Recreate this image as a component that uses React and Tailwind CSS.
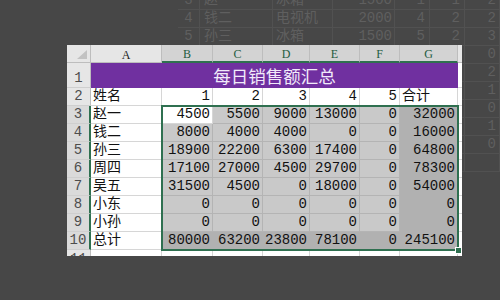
import React from "react";

const FONT = "font-['Liberation_Mono','Noto_Sans_CJK_SC',monospace]";

const rows = [
  ["赵一", 4500, 5500, 9000, 13000, 0, 32000],
  ["钱二", 8000, 4000, 4000, 0, 0, 16000],
  ["孙三", 18900, 22200, 6300, 17400, 0, 64800],
  ["周四", 17100, 27000, 4500, 29700, 0, 78300],
  ["吴五", 31500, 4500, 0, 18000, 0, 54000],
  ["小东", 0, 0, 0, 0, 0, 0],
  ["小孙", 0, 0, 0, 0, 0, 0],
  ["总计", 80000, 63200, 23800, 78100, 0, 245100],
];

const bgRows = [
  ["3", "赵一", "冰箱", "1500", "1", "1", "2"],
  ["4", "钱二", "电视机", "2000", "4", "2", "2"],
  ["5", "孙三", "冰箱", "1500", "5", "2", "3"],
  ["", "", "", "", "", "", "0"],
  ["", "", "", "", "", "", "2"],
  ["", "", "", "", "", "", "1"],
  ["", "", "", "", "", "", "0"],
  ["", "", "", "", "", "", "1"],
  ["", "", "", "", "", "", "0"],
  ["", "", "", "", "", "", ""],
];

function Cell({ children, right, tone }) {
  const toneCls =
    tone === "sel"
      ? "bg-[#c9c9c9] border-[#b4b4b4]"
      : tone === "dark"
      ? "bg-[#b1b1b1] border-[#b1b1b1]"
      : "bg-white border-[#d6d6d6]";
  return (
    <div
      className={`flex items-end overflow-hidden whitespace-nowrap border-r border-b text-[14px] leading-[18px] text-[#111] ${
        right ? "justify-end pr-[2px]" : "pl-[2px]"
      } ${toneCls}`}
    >
      {children}
    </div>
  );
}

function RowHead({ n, sel }) {
  return (
    <div
      className={`flex items-end justify-center overflow-hidden border-b border-[#cfcfcf] text-[14px] leading-[18px] text-[#4d4d4d] ${
        sel
          ? "bg-[#dadada] border-r-2 border-r-[#2f7050]"
          : "bg-[#e6e6e6] border-r border-r-[#bdbdbd]"
      }`}
    >
      {n}
    </div>
  );
}

function ColHead({ l, sel }) {
  return (
    <div
      className={`flex items-center justify-center pt-[2px] border-r border-[#bdbdbd] font-['Liberation_Serif',serif] text-[12px] ${
        sel
          ? "bg-[#d3d3d3] text-[#1f5c3f] border-b-2 border-b-[#2f7050]"
          : "bg-[#e6e6e6] text-[#222] border-b border-b-[#bdbdbd]"
      }`}
    >
      {l}
    </div>
  );
}

export default function App() {
  return (
    <div className={`relative w-[500px] h-[300px] overflow-hidden bg-[#474747] ${FONT}`}>
      {/* faded sheet in the background */}
      <div className="absolute left-[178px] top-[-8px] grid grid-cols-[22px_73px_60px_62px_35px_35px_35px] auto-rows-[18px] text-[14px] leading-[18px] text-[#5f5f5f]">
        {bgRows.map((r, i) => (
          <React.Fragment key={i}>
            <div className="flex items-end justify-center border-b border-r border-[#515151]">{r[0]}</div>
            <div className="flex items-end pl-[4px] border-b border-r border-[#515151]">{r[1]}</div>
            <div className="flex items-end pl-[3px] border-b border-r border-[#515151]">{r[2]}</div>
            <div className="flex items-end justify-end pr-[2px] border-b border-r border-[#515151]">{r[3]}</div>
            <div className="flex items-end justify-end pr-[4px] border-b border-r border-[#515151]">{r[4]}</div>
            <div className="flex items-end justify-end pr-[4px] border-b border-r border-[#515151]">{r[5]}</div>
            <div className="flex items-end justify-end pr-[3px] border-b border-r border-[#515151]">{r[6]}</div>
          </React.Fragment>
        ))}
      </div>

      {/* main sheet */}
      <div className="relative z-10 ml-[67px] mt-[45px] w-[395px] h-[211px] overflow-hidden bg-white">
        <div className="grid grid-cols-[24px_71px_51px_50px_47px_50px_40px_58px_4px] grid-rows-[18px_25px_repeat(9,18px)_6px]">
          {/* header row */}
          <div className="relative bg-[#e6e6e6] border-r border-b border-[#bdbdbd]">
            <div className="absolute right-[3px] bottom-[3px] w-0 h-0 border-l-[10px] border-l-transparent border-b-[9px] border-b-[#c2c2c2]" />
          </div>
          <ColHead l="A" />
          <ColHead l="B" sel />
          <ColHead l="C" sel />
          <ColHead l="D" sel />
          <ColHead l="E" sel />
          <ColHead l="F" sel />
          <ColHead l="G" sel />
          <div className="bg-[#e6e6e6] border-b border-[#bdbdbd]" />

          {/* row 1 */}
          <RowHead n="1" />
          <div className="col-span-7 flex items-center justify-center pt-[1px] bg-[#7030a0] font-['Noto_Sans_CJK_SC',sans-serif] text-[17.5px] tracking-[0px] text-[#f1eafa]">
            每日销售额汇总
          </div>
          <div className="bg-white border-b border-[#d6d6d6]" />

          {/* row 2 */}
          <RowHead n="2" />
          <Cell>姓名</Cell>
          <Cell right>1</Cell>
          <Cell right>2</Cell>
          <Cell right>3</Cell>
          <Cell right>4</Cell>
          <Cell right>5</Cell>
          <Cell>合计</Cell>
          <div className="bg-white border-b border-[#d6d6d6]" />

          {/* rows 3-10 */}
          {rows.map((r, i) => (
            <React.Fragment key={i}>
              <RowHead n={String(i + 3)} sel />
              <Cell>{r[0]}</Cell>
              {r.slice(1).map((v, j) => (
                <Cell
                  key={j}
                  right
                  tone={
                    i === 0 && j === 0
                      ? "white"
                      : i === 7 || j === 5
                      ? "dark"
                      : "sel"
                  }
                >
                  {v}
                </Cell>
              ))}
              <div className="bg-white border-b border-[#d6d6d6]" />
            </React.Fragment>
          ))}

          {/* row 11 (cut) */}
          <div className="flex items-start justify-center overflow-hidden bg-[#e6e6e6] border-r border-[#bdbdbd] text-[14px] leading-[18px] text-[#4d4d4d]">
            11
          </div>
          <div className="bg-white border-r border-[#d6d6d6]" />
          <div className="bg-white border-r border-[#d6d6d6]" />
          <div className="bg-white border-r border-[#d6d6d6]" />
          <div className="bg-white border-r border-[#d6d6d6]" />
          <div className="bg-white border-r border-[#d6d6d6]" />
          <div className="bg-white border-r border-[#d6d6d6]" />
          <div className="bg-white border-r border-[#d6d6d6]" />
          <div className="bg-white" />
        </div>

        {/* selection outline */}
        <div className="absolute left-[94px] top-[60px] w-[298px] h-[146px] border-2 border-[#2f7050] pointer-events-none" />
        <div className="absolute left-[388px] top-[202px] w-[7px] h-[7px] bg-[#2f7050] border border-white" />
      </div>
    </div>
  );
}
